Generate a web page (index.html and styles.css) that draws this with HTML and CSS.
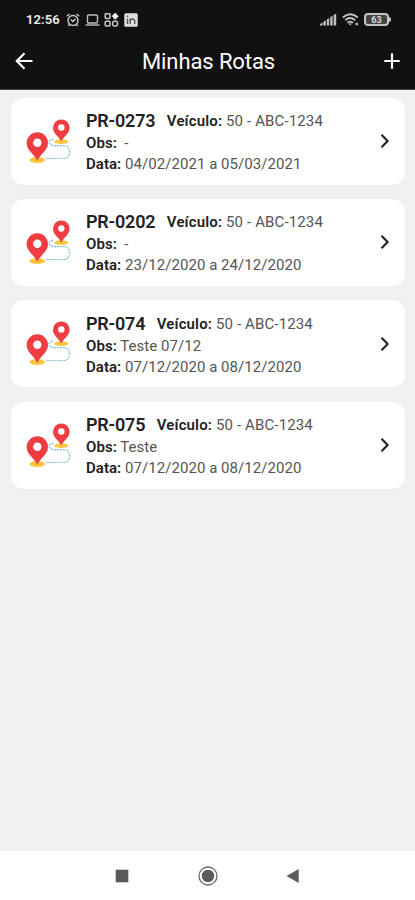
FILE: index.html
```html
<!DOCTYPE html>
<html lang="pt-BR">
<head>
<meta charset="utf-8">
<title>Minhas Rotas</title>
<link rel="stylesheet" href="styles.css">
</head>
<body>
<svg class="defs" aria-hidden="true">
  <symbol id="route" viewBox="0 0 45 45">
    <ellipse cx="35.3" cy="22.6" rx="7" ry="2.4" fill="#fcc53c"/>
    <ellipse cx="11.2" cy="41" rx="7.8" ry="3" fill="#fcc53c"/>
    <path d="M27 20Q22 22 23 24Q24 26.300 29 26.600H38Q43.500 27 43.500 33Q43.500 39 38 39.500H20" fill="none" stroke="#78bfd0" stroke-width="1.1" stroke-dasharray="2 1"/>
    <path d="M35.300 22.500C33 17.500 27 14.500 27 8.700A8.300 8.300 0 0 1 43.600 8.700C43.600 14.500 37.600 17.500 35.300 22.500Z" fill="#f13c41"/>
    <circle cx="35.300" cy="8.500" r="3.200" fill="#fff"/>
    <path d="M11.300 42C8.500 35 .6 31.500 .6 24A10.700 10.700 0 0 1 22 24C22 31.500 14.100 35 11.300 42Z" fill="#f13c41"/>
    <circle cx="11.300" cy="23.700" r="4.200" fill="#fff"/>
  </symbol>
  <symbol id="chevron" viewBox="0 0 10 16">
    <path d="M1.500 1.800L7.600 8L1.500 14.200" fill="none" stroke="#222" stroke-width="2.100"/>
  </symbol>
</svg>
<header class="top">
  <div class="status">
    <span class="clock">12:56</span>
    <svg class="alarm" width="14" height="14" viewBox="0 0 14 14" fill="none" stroke="#c8c8c8" stroke-width="1.400"><circle cx="7" cy="7.500" r="5"/><path d="M.8 3.200L3.500 1M13.200 3.200L10.500 1M4.700 6.500L7 8.500L9.500 6M3.500 11.500L2.300 13M10.500 11.500L11.700 13"/></svg>
    <svg class="laptop" width="15" height="14" viewBox="0 0 15 14" fill="none" stroke="#bdbdbd" stroke-width="1.400"><rect x="2.500" y="2" width="10" height="8" rx="1"/><path d="M.5 12H14.500"/></svg>
    <svg class="apps" width="15" height="14" viewBox="0 0 15 14" fill="none" stroke="#c8c8c8" stroke-width="1.500"><rect x="1.200" y=".7" width="4.800" height="4.800" rx="1"/><rect x="1.200" y="8.200" width="4.800" height="4.800" rx="1"/><rect x="8.700" y="8.200" width="4.800" height="4.800" rx="1.500"/><path d="M11.200 0L14.400 3.200L11.200 6.400L8 3.200Z" fill="#f5f5f5" stroke="#f5f5f5" stroke-width=".6"/></svg>
    <svg class="linked" width="14" height="14" viewBox="0 0 14 14"><rect x=".3" y=".3" width="13.400" height="13.400" rx="1.500" fill="#dedede"/><path d="M3.500 2.500V4M3.500 5.500V11M6.200 11V5.500M6.200 8Q6.500 6 8.500 6Q10.700 6 10.700 8.500V11" fill="none" stroke="#555" stroke-width="1.400"/></svg>
    <svg class="signal" width="17" height="13" viewBox="0 0 17 13" fill="#bdbdbd"><path d="M0 12.500V11L2.500 9.500V12.500ZM3.300 12.500V8.700L5.800 7.200V12.500ZM6.800 12.500V6.500L9.200 5V12.500ZM10.200 12.500V4.200L12.600 2.700V12.500ZM13.600 12.500V2L16.200 .5V12.500Z"/></svg>
    <svg class="wifi" width="17" height="13" viewBox="0 0 17 13" fill="none" stroke="#c4c4c4" stroke-width="1.800"><path d="M.8 4.500Q8 -2 15.800 4.500M3.200 7.200Q8 2.800 13.300 7.200M5.500 9.700Q8 7.500 11 9.700"/><path d="M6.500 10.500H10L8.200 12.500Z" fill="#c4c4c4" stroke="none"/><circle cx="14.800" cy="11" r="1.600" fill="#a5a5a5" stroke="none"/></svg>
    <span class="battery">63</span>
  </div>
  <nav class="bar">
    <svg width="18" height="18" viewBox="0 0 18 18" fill="none" stroke="#fff" stroke-width="2.200"><path d="M17.500 9H2M9.500 1.200L1.800 9L9.500 16.800"/></svg>
    <h1>Minhas Rotas</h1>
    <svg width="16" height="16" viewBox="0 0 16 16" stroke="#fff" stroke-width="2.100"><path d="M8 .3V15.700M.3 8H15.700"/></svg>
  </nav>
</header>
<main class="list">
  <article class="card">
    <svg class="route"><use href="#route"/></svg>
    <div class="info">
      <div class="head"><h2>PR-0273</h2><p class="vehicle"><b>Veículo:</b> 50 - ABC-1234</p></div>
      <p class="obs"><b>Obs:</b> &nbsp;-</p>
      <p class="date"><b>Data:</b> 04/02/2021 a 05/03/2021</p>
    </div>
    <svg class="chevron"><use href="#chevron"/></svg>
  </article>
  <article class="card">
    <svg class="route"><use href="#route"/></svg>
    <div class="info">
      <div class="head"><h2>PR-0202</h2><p class="vehicle"><b>Veículo:</b> 50 - ABC-1234</p></div>
      <p class="obs"><b>Obs:</b> &nbsp;-</p>
      <p class="date"><b>Data:</b> 23/12/2020 a 24/12/2020</p>
    </div>
    <svg class="chevron"><use href="#chevron"/></svg>
  </article>
  <article class="card">
    <svg class="route"><use href="#route"/></svg>
    <div class="info">
      <div class="head"><h2>PR-074</h2><p class="vehicle"><b>Veículo:</b> 50 - ABC-1234</p></div>
      <p class="obs"><b>Obs:</b> Teste 07/12</p>
      <p class="date"><b>Data:</b> 07/12/2020 a 08/12/2020</p>
    </div>
    <svg class="chevron"><use href="#chevron"/></svg>
  </article>
  <article class="card">
    <svg class="route"><use href="#route"/></svg>
    <div class="info">
      <div class="head"><h2>PR-075</h2><p class="vehicle"><b>Veículo:</b> 50 - ABC-1234</p></div>
      <p class="obs"><b>Obs:</b> Teste</p>
      <p class="date"><b>Data:</b> 07/12/2020 a 08/12/2020</p>
    </div>
    <svg class="chevron"><use href="#chevron"/></svg>
  </article>
</main>
<footer class="system">
  <svg width="14" height="14" viewBox="0 0 14 14"><rect x=".7" y=".7" width="12.600" height="12.600" fill="#5b5b5b"/></svg>
  <svg width="20" height="20" viewBox="0 0 20 20"><circle cx="10" cy="10" r="9" fill="none" stroke="#686868" stroke-width="1.300"/><circle cx="10" cy="10" r="6.200" fill="#5b5b5b"/></svg>
  <svg width="14" height="16" viewBox="0 0 14 16"><path d="M.5 8L12.700 1V15Z" fill="#5b5b5b"/></svg>
</footer>
</body>
</html>
```

FILE: styles.css
```css
* { box-sizing: border-box; }
body {
  margin: 0;
  height: 900px;
  display: flex;
  flex-direction: column;
  background: #f0f0f0;
  color: #222;
  font-family: Roboto, "Liberation Sans", sans-serif;
  overflow: hidden;
}
h1, h2, p { margin: 0; }
svg { display: block; flex: none; }
.defs { width: 0; height: 0; }
.top {
  height: 90px;
  flex: none;
  background: #111;
  color: #fff;
  border-bottom: 1px solid #444;
}
.status {
  height: 39px;
  padding: 0 24px 0 26px;
  display: flex;
  align-items: center;
}
.clock { width: 40px; font-size: 13px; font-weight: 600; letter-spacing: .1px; color: #eee; }
.laptop { margin-left: 5px; }
.apps { margin-left: 4px; }
.linked { margin-left: 5px; }
.signal { margin-left: auto; }
.wifi { margin-left: 5px; }
.battery {
  position: relative;
  width: 25px;
  height: 13px;
  margin: 0 2px 0 5px;
  border: 2px solid #c4c4c4;
  border-radius: 4px;
  background: #444;
  color: #ddd;
  font-size: 9px;
  font-weight: 700;
  line-height: 10px;
  text-align: center;
}
.battery::after {
  content: "";
  position: absolute;
  right: -4px;
  top: 2px;
  width: 2px;
  height: 5px;
  border-radius: 0 2px 2px 0;
  background: #c4c4c4;
}
.bar {
  height: 44px;
  padding: 0 15px;
  display: flex;
  align-items: center;
  justify-content: space-between;
}
.bar h1 { font-size: 22px; font-weight: 400; letter-spacing: -.1px; line-height: 26px; padding-top: 2px; }
.list {
  flex: 1;
  padding: 7.600px 10px 0 11px;
  display: flex;
  flex-direction: column;
  gap: 14.400px;
}
.card {
  height: 87px;
  flex: none;
  padding: 0 15px;
  display: flex;
  align-items: center;
  background: #fff;
  border-radius: 13px;
}
.route { width: 45px; height: 45px; }
.info { flex: 1; margin-left: 15px; padding-top: 2px; white-space: nowrap; }
.head { display: flex; align-items: center; gap: 11.500px; height: 24px; line-height: 24px; }
.head h2 { font-size: 18px; font-weight: 600; letter-spacing: -.2px; line-height: 24px; }
.info p { font-size: 15px; letter-spacing: .05px; color: #555; }
.info .vehicle { letter-spacing: .14px; }
.info b { font-weight: 600; color: #222; }
.obs { line-height: 21px; }
.date { line-height: 21px; }
.chevron { width: 10px; height: 16px; }
.system {
  height: 49px;
  flex: none;
  padding: 0 115px;
  display: flex;
  align-items: center;
  justify-content: space-between;
  background: #fff;
}
```
